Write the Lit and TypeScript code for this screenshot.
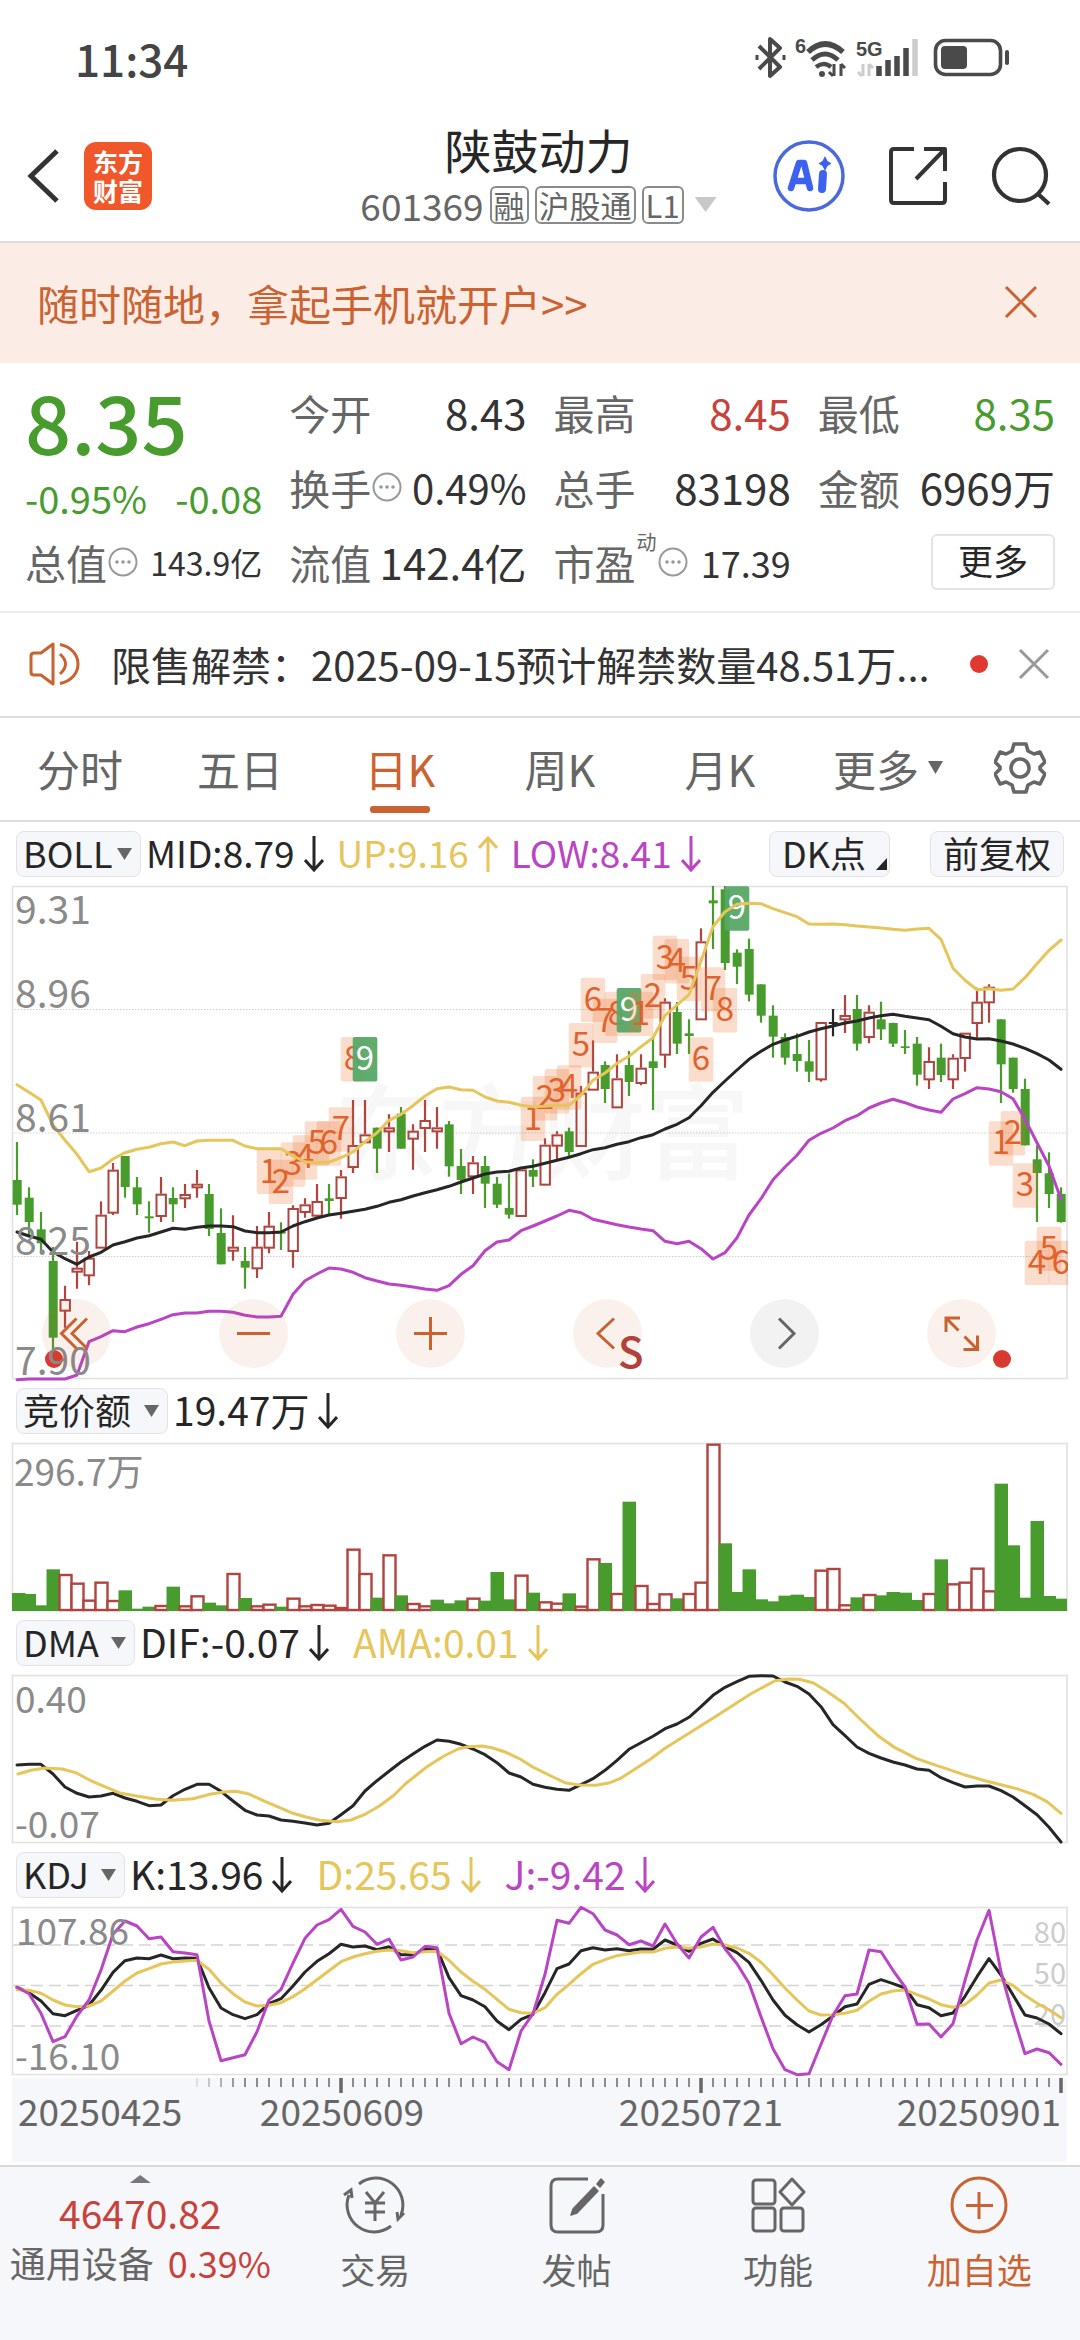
import { LitElement, html, svg, css, nothing } from "lit";
import { customElement, state } from "lit/decorators.js";
import { classMap } from "lit/directives/class-map.js";

/* ---- Series data. Values are in plot units, three units per pixel, measured down the panel. ---- */

type Candle = [string, number, number, number, number];

// kind, high, body top, body bottom, low
const CANDLES: Candle[] = [
  ["g", 813, 927, 1001, 1032], ["g", 949, 980, 1053, 1095], ["g", 1023, 1075, 1117, 1143], ["g", 1128, 1170, 1400, 1435],
  ["r", 1244, 1284, 1319, 1370], ["r", 1112, 1190, 1202, 1253], ["r", 1140, 1160, 1213, 1243], ["r", 991, 1031, 1130, 1130],
  ["r", 876, 896, 1025, 1032], ["g", 855, 855, 948, 980], ["g", 918, 949, 1000, 1032], ["g", 991, 1036, 1042, 1085],
  ["r", 918, 968, 1035, 1053], ["g", 949, 981, 1000, 1053], ["r", 939, 969, 982, 1011], ["r", 897, 938, 949, 980],
  ["g", 939, 969, 1074, 1095], ["g", 1012, 1086, 1180, 1180], ["r", 1033, 1127, 1139, 1169], ["g", 1128, 1170, 1190, 1253],
  ["r", 1065, 1127, 1192, 1221], ["r", 1023, 1064, 1130, 1147], ["g", 1054, 1082, 1088, 1137], ["r", 1003, 1011, 1140, 1190],
  ["r", 982, 1000, 1023, 1040], ["r", 939, 990, 1034, 1034], ["g", 939, 982, 990, 1032], ["r", 897, 916, 981, 1043],
  ["r", 687, 822, 888, 906], ["r", 687, 790, 814, 814], ["g", 770, 770, 833, 906], ["r", 730, 769, 781, 843],
  ["g", 708, 728, 833, 833], ["r", 760, 779, 803, 896], ["r", 687, 747, 771, 843], ["r", 708, 769, 781, 833],
  ["g", 750, 760, 886, 917], ["g", 834, 885, 927, 969], ["r", 855, 874, 916, 969], ["g", 855, 885, 938, 1011],
  ["g", 918, 938, 1001, 1011], ["g", 908, 1011, 1031, 1043], ["r", 895, 895, 1035, 1035], ["g", 865, 897, 917, 948],
  ["r", 802, 821, 941, 941], ["r", 781, 790, 824, 865], ["g", 770, 781, 843, 860], ["r", 645, 665, 825, 825],
  ["r", 508, 602, 656, 656], ["g", 571, 582, 654, 696], ["r", 550, 622, 709, 709], ["g", 540, 582, 633, 675],
  ["r", 550, 590, 636, 643], ["g", 500, 571, 591, 717], ["r", 382, 392, 551, 590], ["g", 393, 423, 518, 549],
  ["g", 445, 487, 495, 549], ["r", 172, 211, 445, 445], ["g", 45, 88, 97, 234], ["g", 45, 55, 276, 297],
  ["g", 235, 245, 287, 339], ["g", 203, 234, 371, 391], ["g", 340, 340, 434, 455], ["g", 403, 434, 497, 560],
  ["g", 487, 498, 560, 581], ["g", 487, 549, 570, 602], ["g", 507, 571, 602, 633], ["r", 453, 453, 625, 632],
  ["k", 414, 453, 459, 496], ["r", 372, 432, 445, 486], ["g", 372, 414, 518, 539], ["r", 403, 422, 498, 517],
  ["g", 392, 445, 475, 507], ["g", 455, 456, 518, 528], ["g", 477, 526, 531, 549], ["g", 498, 518, 611, 644],
  ["r", 529, 570, 625, 654], ["g", 518, 560, 612, 633], ["r", 550, 560, 625, 654], ["r", 485, 485, 561, 602],
  ["r", 350, 392, 456, 500], ["r", 340, 347, 394, 455], ["g", 445, 445, 580, 696], ["g", 560, 560, 654, 665],
  ["g", 623, 654, 823, 823], ["g", 823, 865, 906, 1053], ["g", 844, 907, 969, 1011], ["g", 949, 969, 1053, 1055],
];

const BOLL_UP = [
  641, 664, 687, 762, 808, 850, 902, 891, 864, 845, 835, 829, 818, 813, 824, 810, 808, 808, 808, 825, 833, 833, 833, 855,
  872, 875, 873, 860, 843, 812, 785, 748, 730, 704, 675, 653, 648, 656, 658, 678, 690, 694, 703, 707, 706, 703, 703, 672,
  628, 606, 577, 556, 527, 500, 434, 402, 371, 270, 167, 122, 100, 97, 98, 113, 125, 137, 159, 160, 159, 161, 165, 168,
  171, 175, 178, 174, 172, 205, 292, 328, 356, 353, 358, 354, 320, 278, 238, 207,
];
const BOLL_MID = [
  1083, 1095, 1105, 1143, 1163, 1180, 1158, 1144, 1122, 1112, 1101, 1094, 1083, 1072, 1075, 1069, 1065, 1065, 1067, 1080,
  1085, 1085, 1083, 1065, 1052, 1041, 1032, 1027, 1021, 1015, 1006, 994, 986, 975, 965, 956, 946, 933, 921, 909, 903, 901,
  891, 886, 877, 868, 859, 848, 836, 830, 820, 812, 800, 791, 774, 760, 740, 704, 664, 630, 597, 565, 541, 520, 507, 496,
  483, 473, 465, 456, 450, 441, 434, 430, 436, 441, 446, 466, 488, 498, 504, 503, 510, 519, 532, 548, 567, 595,
];
const BOLL_LOW = [
  1526, 1524, 1524, 1524, 1524, 1512, 1412, 1397, 1379, 1382, 1368, 1358, 1345, 1331, 1326, 1326, 1321, 1321, 1324, 1333,
  1338, 1338, 1336, 1270, 1229, 1209, 1191, 1194, 1204, 1220, 1230, 1239, 1243, 1248, 1254, 1258, 1244, 1210, 1184, 1139,
  1113, 1107, 1079, 1065, 1050, 1035, 1018, 1025, 1045, 1053, 1061, 1068, 1074, 1079, 1111, 1118, 1111, 1133, 1164, 1145,
  1100, 1032, 983, 926, 888, 853, 808, 787, 771, 749, 734, 711, 696, 685, 695, 708, 717, 724, 684, 668, 650, 654, 662,
  683, 745, 815, 885, 985,
];

// candle index, top of the tag, count
const COUNTS: [number, number, number][] = [
  [21, 836, 1], [22, 866, 2], [23, 814, 3], [24, 793, 4], [25, 751, 5], [26, 751, 6], [27, 709, 7], [28, 498, 8], [29, 498, 9],
  [43, 677, 1], [44, 615, 2], [45, 594, 3], [46, 583, 4], [47, 456, 5], [48, 320, 6], [49, 383, 7], [50, 362, 8], [51, 351, 9],
  [52, 362, 1], [53, 309, 2], [54, 194, 3], [55, 204, 4], [56, 257, 5], [57, 499, 6], [58, 289, 7], [59, 351, 8], [60, 46, 9],
  [82, 751, 1], [83, 720, 2], [84, 877, 3], [85, 1109, 4], [86, 1067, 5], [87, 1109, 6],
];

const VOLUME =
  "g636 g639 g673 g565 r579 r605 r656 r602 r657 g628 g683 g677 r672 g617 r673 r643 g665 g673 r576 g651 r673 r668 g677 r650 " +
  "r673 r669 r671 r678 r503 r576 g650 r520 g643 r666 r673 g656 g667 g658 r650 g659 g573 g655 r581 g635 r661 r665 g637 r674 " +
  "r532 g546 r636 g362 r612 r666 r637 g652 r636 r602 r188 g487 g633 g565 g655 g661 g644 g641 g648 r566 r561 r670 g649 r639 " +
  "g643 g633 g635 g657 r636 g535 r607 r602 r560 r628 g308 g493 g650 g420 g645 g653";

const DIF = [
  461, 459, 459, 488, 527, 546, 557, 554, 546, 560, 570, 583, 581, 553, 534, 519, 519, 540, 569, 597, 611, 614, 626, 630,
  635, 641, 636, 610, 583, 539, 508, 480, 452, 428, 405, 386, 390, 399, 413, 430, 454, 485, 497, 519, 528, 534, 537, 520,
  502, 477, 447, 414, 394, 375, 352, 338, 318, 286, 252, 228, 211, 195, 193, 194, 212, 225, 248, 286, 340, 373, 407, 426,
  440, 452, 461, 473, 477, 499, 514, 527, 524, 524, 538, 557, 583, 610, 648, 692,
];
// The average is smooth enough to be kept as sparse x,y pairs.
const AMA: [number, number][] = [
  [18, 488], [31, 477], [45, 470], [62, 473], [76, 484], [90, 507], [107, 529], [121, 546], [138, 555], [155, 563],
  [172, 567], [193, 562], [210, 549], [224, 542], [236, 540], [248, 547], [265, 570], [293, 606], [306, 617], [320, 627],
  [337, 631], [351, 626], [365, 609], [379, 585], [393, 554], [406, 516], [427, 466], [444, 434], [458, 413], [468, 406],
  [482, 404], [492, 409], [506, 423], [520, 443], [534, 469], [551, 494], [565, 514], [579, 521], [596, 522], [610, 514],
  [620, 502], [634, 475], [651, 442], [665, 411], [689, 366], [716, 315], [751, 247], [775, 208], [789, 203], [799, 204],
  [813, 214], [826, 238], [844, 276], [861, 326], [878, 373], [895, 409], [916, 441], [937, 463], [964, 490], [985, 508],
  [1002, 521], [1019, 534], [1033, 549], [1047, 571], [1061, 606],
];

const K_LINE = [
  409, 425, 450, 488, 494, 478, 463, 418, 364, 329, 321, 323, 312, 323, 321, 322, 410, 471, 491, 503, 491, 458, 443, 405,
  363, 331, 308, 280, 288, 285, 296, 287, 311, 311, 295, 294, 380, 434, 447, 467, 510, 536, 505, 490, 425, 353, 339, 299,
  290, 297, 293, 299, 294, 295, 267, 282, 301, 277, 264, 287, 305, 334, 388, 447, 493, 521, 543, 521, 495, 467, 459, 400,
  386, 398, 411, 461, 470, 494, 486, 436, 377, 323, 372, 432, 492, 501, 519, 548,
];
const D_LINE = [
  416, 418, 427, 447, 462, 467, 465, 450, 420, 390, 366, 353, 339, 333, 330, 328, 355, 396, 428, 453, 465, 463, 455, 437,
  413, 386, 359, 332, 318, 308, 301, 297, 299, 305, 302, 301, 328, 363, 391, 415, 445, 475, 485, 487, 470, 430, 400, 368,
  340, 326, 314, 308, 303, 303, 292, 288, 292, 288, 279, 282, 291, 307, 334, 371, 411, 447, 480, 492, 491, 487, 478, 451,
  429, 420, 417, 431, 444, 461, 469, 461, 432, 396, 387, 403, 433, 457, 476, 500,
];
const J_LINE = [
  409, 428, 487, 572, 557, 495, 447, 357, 250, 210, 225, 263, 258, 302, 306, 311, 510, 629, 620, 611, 542, 447, 415, 336,
  262, 222, 206, 175, 226, 243, 280, 264, 327, 318, 286, 290, 487, 578, 558, 574, 632, 656, 540, 488, 370, 208, 217, 169,
  188, 237, 252, 281, 270, 285, 219, 278, 321, 258, 229, 293, 338, 397, 497, 593, 656, 671, 668, 580, 493, 434, 429, 297,
  302, 358, 408, 520, 519, 558, 518, 388, 267, 178, 363, 493, 608, 594, 605, 640,
];

/* ---- Plot geometry ---- */

const STEP = 12;
const FIRST = 17;
const RED = "#b0443f";
const GREEN = "#489c2e";
const INK = "#262626";
const YELLOW = "#e6c55a";
const PURPLE = "#b944c4";

const cx = (i: number) => FIRST + STEP * i;
const line = (values: number[], top: number, color: string) =>
  svg`<polyline points=${values.map((v, i) => `${cx(i)},${((v - top) / 3).toFixed(1)}`).join(" ")}
    fill="none" stroke=${color} stroke-width="3" stroke-linejoin="round" stroke-linecap="round"/>`;
const frame = (h: number) =>
  svg`<rect x="12.5" y="0.5" width="1054.5" height=${h - 1} fill="none" stroke="#e2e2e2" stroke-width="1.6"/>`;

const base = css`
  *, *::before, *::after { box-sizing: border-box; }
  button, select {
    font: inherit;
    color: inherit;
    background: none;
    border: 0;
    margin: 0;
    padding: 0;
  }
  button { cursor: pointer; }
  svg { display: block; flex: none; }
`;

const plot = css`
  :host { display: block; position: relative; }
  .plot { width: 100%; height: auto; overflow: visible; }
  .scale { fill: #8a8a8a; font-size: 37px; }
  .price { fill: #8a8a8a; font-size: 39px; }
  .level { fill: #cccccc; font-size: 29px; text-anchor: end; }
`;

@customElement("candle-panel")
class CandlePanel extends LitElement {
  static styles = [
    base,
    plot,
    css`
      .mark { font-size: 104px; font-weight: 500; fill: #f7f7f7; }
      .count { font-size: 33px; fill: #e0622c; text-anchor: middle; }
      .count-nine { fill: #ffffff; }
      .sell { font-size: 42px; font-weight: 500; fill: #b0403a; }
      .tools {
        position: absolute;
        left: 42px;
        right: 84px;
        bottom: 11px;
        display: flex;
        justify-content: space-between;
      }
      .tool {
        width: 69px;
        height: 69px;
        border-radius: 50%;
        background: rgba(203, 98, 49, 0.09);
        color: #c8632f;
      }
      .tool-off { background: rgba(0, 0, 0, 0.05); color: #666666; }
    `,
  ];

  private candle([kind, high, top, bottom, low]: Candle, i: number) {
    const x = cx(i);
    const y = (v: number) => (v - 45) / 3;
    const color = kind === "r" ? RED : kind === "g" ? GREEN : INK;
    if (kind === "r") {
      return svg`<path d="M${x} ${y(high)}V${y(top)}M${x} ${y(bottom)}V${y(low)}" stroke=${color} stroke-width="2.2"/>
        <rect x=${x - 4.5} y=${y(top) + 1} width="9.4" height=${Math.max(y(bottom) - y(top) - 1, 2)}
          fill="none" stroke=${color} stroke-width="2"/>`;
    }
    return svg`<path d="M${x} ${y(high)}V${y(low)}" stroke=${color} stroke-width="2.2"/>
      <rect x=${x - 4.3} y=${y(top)} width="9" height=${y(bottom) - y(top)} fill=${color}/>`;
  }

  private count([i, top, n]: [number, number, number]) {
    const y = (top - 45) / 3;
    const nine = n === 9;
    return svg`<rect x=${cx(i) - 12.3} y=${y} width="24.6" height="44.4" rx="2"
        fill=${nine ? "#57a866" : "#e9722f"} fill-opacity=${nine ? 0.95 : 0.24}/>
      <text class=${nine ? "count count-nine" : "count"} x=${cx(i)} y=${y + 33}>${n}</text>`;
  }

  render() {
    const tools: [string, string, boolean][] = [
      ["最早", "M34.500 19.500 19.500 34.500l15 15M45 19.500 30 34.500l15 15", false],
      ["缩小", "M18 34.500h33", false],
      ["放大", "M18 34.500h33M34.500 18v33", false],
      ["向前", "M41 19.500 25 34.500l16 15", false],
      ["向后", "M29 19.500l15 15-15 15", true],
      ["全屏", "M33 19H19v14M19 19l12.500 12.500M36.500 50.500h14v-14M50.500 50.500 37.500 37.500", false],
    ];
    return html`
      <svg class="plot" viewBox="0 0 1080 493" role="img" aria-label="日K线与BOLL">
        <clipPath id="inside"><rect x="12" y="0" width="1056" height="493"/></clipPath>
        <text class="mark" x="334" y="286">东方财富</text>
        ${[123.5, 247, 370.5].map((y) => svg`<path d="M12 ${y}H1067" stroke="#cfcfcf" stroke-width="1" stroke-dasharray="1.500 1.500"/>`)}
        ${frame(493)}
        <g clip-path="url(#inside)">
          ${CANDLES.map((c, i) => this.candle(c, i))}
          ${COUNTS.map((c) => this.count(c))}
        </g>
        ${line(BOLL_UP, 45, YELLOW)} ${line(BOLL_MID, 45, INK)} ${line(BOLL_LOW, 45, PURPLE)}
        <circle cx="54" cy="473" r="9" fill="#d93a30"/>
        <circle cx="1002" cy="473" r="9" fill="#d93a30"/>
        <text class="sell" x="618" y="482">S</text>
        ${[["9.31", 38], ["8.96", 122], ["8.61", 246], ["8.25", 369], ["7.90", 489]].map(
          ([t, y]) => svg`<text class="price" x="15" y=${y}>${t}</text>`
        )}
      </svg>
      <div class="tools">
        ${tools.map(
          ([name, d, off]) => html`<button class=${classMap({ tool: true, "tool-off": off })} aria-label=${name}>
            <svg width="69" height="69" fill="none" stroke="currentColor" stroke-width="3"><path d=${d}/></svg>
          </button>`
        )}
      </div>
    `;
  }
}

@customElement("volume-panel")
class VolumePanel extends LitElement {
  static styles = [base, plot];

  render() {
    return html`<svg class="plot" viewBox="0 0 1080 168" role="img" aria-label="竞价额">
      ${frame(168)}
      ${VOLUME.split(" ").map((item, i) => {
        const y = (Number(item.slice(1)) - 186) / 3;
        const x = cx(i);
        return item[0] === "g"
          ? svg`<rect x=${Math.max(x - 6.5, 12)} y=${y} width=${i === 87 ? 12.5 : 13.5} height=${168 - y} fill=${GREEN}/>`
          : svg`<rect x=${x - 5.5} y=${y + 1} width="12" height=${166 - y} fill="#ffffff" stroke=${RED} stroke-width="2.4"/>`;
      })}
      <text class="scale" x="14" y="43">296.7万</text>
    </svg>`;
  }
}

@customElement("dma-panel")
class DmaPanel extends LitElement {
  static styles = [base, plot];

  render() {
    return html`<svg class="plot" viewBox="0 0 1080 168" role="img" aria-label="DMA">
      ${frame(168)} ${line(DIF, 191, INK)}
      <polyline points=${AMA.map(([x, y]) => `${x},${((y - 191) / 3).toFixed(1)}`).join(" ")}
        fill="none" stroke=${YELLOW} stroke-width="3" stroke-linejoin="round" stroke-linecap="round"/>
      <text class="scale" x="15" y="38">0.40</text>
      <text class="scale" x="15" y="163">-0.07</text>
    </svg>`;
  }
}

@customElement("kdj-panel")
class KdjPanel extends LitElement {
  static styles = [base, plot];

  render() {
    return html`<svg class="plot" viewBox="0 0 1080 168" role="img" aria-label="KDJ">
      ${[38, 78.500, 119].map((y) => svg`<path d="M13 ${y}H1067" stroke="#d4d4d4" stroke-width="1.400" stroke-dasharray="12 6"/>`)}
      ${frame(168)}
      <text class="level" x="1066" y="36">80</text>
      <text class="level" x="1066" y="77">50</text>
      <text class="level" x="1066" y="118">20</text>
      ${line(K_LINE, 168, INK)} ${line(D_LINE, 168, YELLOW)} ${line(J_LINE, 168, PURPLE)}
      <text class="scale" x="16" y="38">107.86</text>
      <text class="scale" x="15" y="163">-16.10</text>
    </svg>`;
  }
}

type Reading = [string, string, "up" | "down"];

@customElement("indicator-bar")
class IndicatorBar extends LitElement {
  static properties = { name: {}, readings: { attribute: false }, compact: { type: Boolean } };
  declare name: string;
  declare readings: Reading[];
  declare compact: boolean;

  static styles = [
    base,
    css`
      :host { display: block; }
      .bar { display: flex; align-items: center; height: 64px; padding: 0 16px; color: #262626; }
      .chip {
        display: flex;
        align-items: center;
        gap: 12px;
        height: 46px;
        padding: 0 8px 0 6px;
        border: 1px solid #e2e3e8;
        border-radius: 8px;
        background: #f6f7fa;
        font-size: 36px;
        line-height: 40px;
      }
      .chip-tight { gap: 4px; }
      .chip-wide { gap: 10px; padding: 0 12px; }
      .pick { appearance: none; outline: 0; line-height: 40px; height: 44px; padding-bottom: 4px; cursor: pointer; }
      .caret { width: 15px; height: 12px; background: #666666; clip-path: polygon(0 0, 100% 0, 50% 100%); pointer-events: none; }
      .readings { display: flex; align-items: center; gap: 24px; margin-left: 5px; font-size: 39px; line-height: 46px; flex: 1; }
      .readings-tight { gap: 13px; font-size: 37px; }
      .reading { display: flex; align-items: center; gap: 9px; white-space: nowrap; }
      .figure { padding-bottom: 5px; }
      .ink { color: #262626; }
      .yellow { color: #e6c55a; }
      .purple { color: #b944c4; }
      .extra { display: flex; gap: 40px; }
      .face { padding-bottom: 4px; }
      .corner { width: 11px; height: 12px; margin: 20px -10px 0 0; background: #262626; clip-path: polygon(100% 0, 100% 100%, 0 100%); }
    `,
  ];

  render() {
    return html`<div class="bar">
      <label class=${classMap({ chip: true, "chip-tight": this.compact })}>
        <select class="pick" aria-label="指标"><option>${this.name}</option></select>
        <span class="caret"></span>
      </label>
      <div class=${classMap({ readings: true, "readings-tight": this.compact })}>
        ${this.readings.map(
          ([text, tone, way]) => html`<span class="reading ${tone}"><span class="figure">${text}</span>
            <svg width="20" height="36" fill="none" stroke="currentColor" stroke-width="3">
              <path d=${way === "down" ? "M10 0v34M1 24l9 10 9-10" : "M10 36V2M1 12l9-10 9 10"}/>
            </svg></span>`
        )}
      </div>
      ${this.compact
        ? html`<div class="extra">
            <button class="chip chip-wide"><span class="face">DK点</span><span class="corner"></span></button>
            <button class="chip chip-wide"><span class="face">前复权</span></button>
          </div>`
        : nothing}
    </div>`;
  }
}

@customElement("stock-header")
class StockHeader extends LitElement {
  static styles = [
    base,
    css`
      :host { display: block; border-bottom: 2px solid #dcdcdc; }
      .status { display: flex; justify-content: space-between; align-items: center; padding: 28px 70px 30px 75px; }
      .clock { font-size: 44px; line-height: 60px; font-weight: 500; color: #444444; }
      .radio { font: 700 20px/1 "Liberation Sans", sans-serif; fill: #4a4a4a; }
      .nav { display: grid; grid-template-columns: 1fr auto 1fr; align-items: center; height: 123px; padding: 0 29px 8px 26px; }
      .side { display: flex; align-items: center; gap: 24px; }
      .side-end { justify-content: flex-end; gap: 43px; }
      .brand {
        display: grid;
        place-content: center;
        width: 68px;
        height: 68px;
        border-radius: 12px;
        background: #f0572b;
        color: #ffffff;
        font-size: 25px;
        line-height: 29px;
        font-weight: 700;
        text-align: center;
      }
      .title { margin: 0; font-size: 47px; line-height: 58px; font-weight: 400; color: #262626; text-align: center; }
      .code { display: flex; align-items: center; gap: 6px; font-size: 37px; line-height: 54px; color: #666666; }
      .tag { border: 2px solid #8a8a8a; border-radius: 6px; padding: 0 2px; font-size: 31px; line-height: 34px; }
      .down { width: 22px; height: 15px; margin-left: 5px; background: #c8c8c8; clip-path: polygon(0 0, 100% 0, 50% 100%); }
    `,
  ];

  render() {
    return html`
      <div class="status">
        <time class="clock">11:34</time>
        <svg width="256" height="44" viewBox="754 38 256 44" fill="none" stroke="#4a4a4a">
          <path d="M759 48l21 21-10 9V41l10 9-21 21" stroke-width="4" stroke-linejoin="round"/>
          <path d="M757 57v5M784 57v5" stroke-width="3"/>
          <text class="radio" x="795" y="55" stroke="none">6</text>
          <path d="M808 54q17-16 35 0" stroke-width="5.500"/>
          <path d="M812 62q13-12 26 0" stroke-width="5"/>
          <path d="M816 69q8-6 15 0" stroke-width="4.600"/>
          <circle cx="822" cy="76" r="3" fill="#4a4a4a" stroke="none"/>
          <path d="M834 66v12M829 74l4 4M841 78V66M845 70l-4-4" stroke-width="3"/>
          <text class="radio" x="856" y="58" stroke="none">5G</text>
          <path d="M863 66v12M858 74l4 4M869 78V66M873 70l-4-4" stroke="#cccccc" stroke-width="3"/>
          <path d="M879 68v10M888 62v16M897 58v20M906 50v28" stroke-width="5.500"/>
          <path d="M915 41v37" stroke="#cccccc" stroke-width="5.500"/>
          <rect x="935.500" y="42.500" width="65" height="34" rx="10" stroke-width="3.600"/>
          <rect x="941" y="48" width="26" height="23" rx="4" fill="#4a4a4a" stroke="none"/>
          <path d="M1007 54v11" stroke-width="4" stroke-linecap="round"/>
        </svg>
      </div>
      <div class="nav">
        <div class="side">
          <button aria-label="返回">
            <svg width="34" height="56" fill="none" stroke="#333333" stroke-width="5"><path d="M31 3 5 28l26 25"/></svg>
          </button>
          <span class="brand">东方<br />财富</span>
        </div>
        <div>
          <h1 class="title">陕鼓动力</h1>
          <div class="code">601369<span class="tag">融</span><span class="tag">沪股通</span><span class="tag">L1</span><span class="down"></span></div>
        </div>
        <div class="side side-end">
          <button aria-label="Ai">
            <svg width="72" height="72" fill="none" stroke="#4a69dd">
              <circle cx="36" cy="36" r="34" stroke-width="3.500"/>
              <g stroke="#3d62f0" stroke-width="6.500" stroke-linecap="round" stroke-linejoin="round">
                <path d="M18 48 26 23h5l6 25M22 41h12"/><path d="M50 34l-1 15" stroke-width="8"/>
              </g>
              <path d="M52 16l2.500 5 4 2.500-4 2.500-2.500 5-2.500-5-4-2.500 4-2.500z" fill="#3d62f0" stroke="none"/>
            </svg>
          </button>
          <button aria-label="分享">
            <svg width="60" height="60" fill="none" stroke="#333333" stroke-width="4" stroke-linejoin="round">
              <path d="M26 3H6q-3 0-3 3v48q0 3 3 3h48q3 0 3-3V36M36 3h21v22M57 3 28 33"/>
            </svg>
          </button>
          <button aria-label="搜索">
            <svg width="60" height="60" fill="none" stroke="#333333" stroke-width="4.200">
              <circle cx="29" cy="29" r="26"/><path d="M46 47l12 11"/>
            </svg>
          </button>
        </div>
      </div>
    `;
  }
}

@customElement("quote-summary")
class QuoteSummary extends LitElement {
  static styles = [
    base,
    css`
      :host { display: block; border-bottom: 2px solid #ededed; }
      .quote { display: grid; grid-template-columns: repeat(4, minmax(0, 1fr)); column-gap: 27px; padding: 11px 25px 12px; }
      .lead { grid-row: 1 / 3; color: #489c2e; }
      .last { font-size: 81px; line-height: 92px; font-weight: 500; }
      .moves { display: flex; justify-content: space-between; margin-top: 7px; font-size: 38px; line-height: 50px; }
      .cell { display: flex; justify-content: space-between; align-items: center; height: 75px; margin: 0; white-space: nowrap; }
      .label { display: flex; align-items: center; font-size: 41px; color: #666666; gap: 1px; }
      .sup { align-self: flex-start; font-size: 20px; line-height: 20px; }
      .value { margin: 0; font-size: 42px; color: #333333; }
      .value-mid { font-size: 40px; }
      .value-md { font-size: 36px; }
      .value-sm { font-size: 32px; }
      .rise { color: #c8423b; }
      .fall { color: #489c2e; }
      .end { justify-content: flex-end; }
      .more { width: 124px; height: 56px; border: 2px solid #e4e4e4; border-radius: 6px; font-size: 35px; line-height: 48px; padding-bottom: 4px; color: #262626; }
    `,
  ];

  private dots = html`<svg width="30" height="32" fill="#999999">
    <circle cx="15" cy="16" r="13.500" fill="none" stroke="#999999" stroke-width="2"/>
    <circle cx="9" cy="16" r="1.800"/><circle cx="15" cy="16" r="1.800"/><circle cx="21" cy="16" r="1.800"/>
  </svg>`;

  private cell(label: string, value: string, tone = "", hint = false, sup = "") {
    return html`<dl class="cell">
      <dt class="label">${label}${sup ? html`<span class="sup">${sup}</span>` : nothing}${hint ? this.dots : nothing}</dt>
      <dd class="value ${tone}">${value}</dd>
    </dl>`;
  }

  render() {
    return html`<div class="quote">
      <div class="lead">
        <div class="last">8.35</div>
        <div class="moves"><span>-0.95%</span><span>-0.08</span></div>
      </div>
      ${this.cell("今开", "8.43")} ${this.cell("最高", "8.45", "rise")} ${this.cell("最低", "8.35", "fall")}
      ${this.cell("换手", "0.49%", "value-mid", true)} ${this.cell("总手", "83198")} ${this.cell("金额", "6969万")}
      ${this.cell("总值", "143.9亿", "value-sm", true)} ${this.cell("流值", "142.4亿")}
      ${this.cell("市盈", "17.39", "value-md", true, "动")}
      <div class="cell end"><button class="more">更多</button></div>
    </div>`;
  }
}

@customElement("app-root")
class AppRoot extends LitElement {
  @state() private tab = "日K";

  static styles = [
    base,
    css`
      :host {
        display: flex;
        flex-direction: column;
        min-height: 100vh;
        background: #ffffff;
        color: #262626;
        font-family: "Noto Sans CJK SC", "Noto Sans", sans-serif;
      }
      .promo {
        display: flex;
        justify-content: space-between;
        align-items: center;
        height: 120px;
        padding: 0 42px 2px 37px;
        background: #fbede5;
        color: #cb6231;
        font-size: 42px;
      }
      .promo-link { color: inherit; text-decoration: none; }
      .notice { display: flex; align-items: center; height: 105px; padding: 0 30px 2px 28px; border-bottom: 2px solid #dcdcdc; color: #333333; }
      .notice-text { flex: 1; margin-left: 29px; font-size: 40px; white-space: nowrap; overflow: hidden; text-overflow: ellipsis; }
      .dot { width: 18px; height: 18px; border-radius: 50%; background: #e0392f; margin: 0 30px 0 10px; }
      .tabs { display: grid; grid-template-columns: repeat(6, 4fr) 3fr; height: 104px; border-bottom: 2px solid #dcdcdc; color: #666666; }
      .tab {
        display: flex;
        align-items: center;
        justify-content: center;
        gap: 9px;
        font-size: 43px;
        padding-bottom: 3px;
      }
      .tab-on { position: relative; color: #cb6231; }
      .tab-on::after {
        content: "";
        position: absolute;
        left: 50%;
        bottom: 7px;
        width: 60px;
        height: 7px;
        margin-left: -30px;
        border-radius: 3px;
        background: #cb6231;
      }
      .tab-more { padding-left: 16px; }
      .tip { width: 15px; height: 13px; background: #666666; clip-path: polygon(0 0, 100% 0, 50% 100%); }
      .axis { padding: 3px 0; }
      .axis-plot { width: 100%; height: auto; }
      .date { font-size: 37px; fill: #666666; }
      .date-mid { text-anchor: middle; }
      .date-end { text-anchor: end; }
      .dock {
        flex: 1;
        display: grid;
        grid-template-columns: minmax(0, 274fr) repeat(4, minmax(0, 201fr));
        align-items: start;
        border-top: 2px solid #d8d9dd;
        background: #f6f7fa;
        color: #666666;
      }
      .sector { display: flex; flex-direction: column; align-items: center; padding: 8px 0 0 6px; white-space: nowrap; }
      .up { width: 21px; height: 8px; background: #77777c; clip-path: polygon(50% 0, 100% 100%, 0 100%); }
      .index { font-size: 39px; line-height: 50px; margin-top: 4px; color: #c8423b; }
      .change { display: flex; gap: 14px; font-size: 36px; line-height: 50px; }
      .change-value { color: #c8423b; }
      .action { display: flex; flex-direction: column; align-items: center; gap: 10px; padding-top: 8px; font-size: 35px; line-height: 48px; }
      .action-key { color: #cb6231; }
    `,
  ];

  private axis() {
    const ticks = Array.from({ length: 74 }, (_, n) => n + 14);
    return html`<div class="axis">
      <svg class="axis-plot" viewBox="0 0 1080 84" role="img" aria-label="日期">
        <rect x="12" y="0" width="1055" height="84" fill="#f6f7fa"/>
        ${ticks.map((i) => {
          const major = i % 30 === 27;
          return svg`<path d="M${cx(i)} 0V${major ? 15 : 9}" stroke=${major ? "#666666" : "#8c8c8c"}
            stroke-width=${major ? 3.5 : 2} stroke-opacity=${i < 19 ? (i - 14) * 0.22 : 1}/>`;
        })}
        <text class="date" x="18" y="48">20250425</text>
        <text class="date date-mid" x="342" y="48">20250609</text>
        <text class="date date-mid" x="701" y="48">20250721</text>
        <text class="date date-end" x="1061" y="48">20250901</text>
      </svg>
    </div>`;
  }

  private dock() {
    return html`<nav class="dock">
      <div class="sector">
        <span class="up"></span>
        <span class="index">46470.82</span>
        <span class="change">通用设备<span class="change-value">0.39%</span></span>
      </div>
      <button class="action">
        <svg width="66" height="60" fill="none" stroke="#666666" stroke-width="3">
          <path d="M17 9A27 27 0 0 1 59 40M62 38l-6 6-1-7M49 51A27 27 0 0 1 7 20M2 20l7-5 1 8"/>
          <path d="M24 17l9 11 9-11M33 28v18M23 28h20M23 37h20"/>
        </svg>
        交易
      </button>
      <button class="action">
        <svg width="58" height="60" fill="none" stroke="#666666" stroke-width="3">
          <path d="M40 4H10q-7 0-7 7v39q0 7 7 7h38q7 0 7-7V19"/>
          <path d="M49 9 53 4l3 3-4 5zM46 12l4 4-21 22-6 2 2-6z" fill="#666666" stroke-width="1.500" stroke-linejoin="round"/>
        </svg>
        发帖
      </button>
      <button class="action">
        <svg width="56" height="60" fill="none" stroke="#666666" stroke-width="3">
          <rect x="3" y="5" width="22" height="24" rx="3"/><rect x="3" y="33" width="22" height="23" rx="3"/>
          <rect x="31" y="33" width="22" height="23" rx="3"/><path d="M42 4 54 17 42 30 30 17z" stroke-linejoin="round"/>
        </svg>
        功能
      </button>
      <button class="action action-key">
        <svg width="60" height="60" fill="none" stroke="#cb6231" stroke-width="3">
          <circle cx="30" cy="30" r="27"/><path d="M30 17v27M17 30.500h27"/>
        </svg>
        加自选
      </button>
    </nav>`;
  }

  render() {
    const tabs = ["分时", "五日", "日K", "周K", "月K"];
    return html`
      <stock-header></stock-header>
      <div class="promo">
        <a class="promo-link" href="#">随时随地，拿起手机就开户&gt;&gt;</a>
        <button aria-label="关闭">
          <svg width="34" height="34" fill="none" stroke="#cb6231" stroke-width="3"><path d="M2 2l30 30M32 2 2 32"/></svg>
        </button>
      </div>
      <quote-summary></quote-summary>
      <div class="notice">
        <svg width="54" height="46" fill="none" stroke="#c8632f" stroke-width="3" stroke-linejoin="round">
          <path d="M25 3v40L13 34H6q-3 0-3-3V15q0-3 3-3h7z"/><path d="M32 13q11 10 0 20M32 3.500c24 5 24 34 0 39"/>
        </svg>
        <span class="notice-text">限售解禁：2025-09-15预计解禁数量48.51万...</span>
        <span class="dot"></span>
        <button aria-label="关闭">
          <svg width="32" height="32" fill="none" stroke="#999999" stroke-width="3"><path d="M2 2l28 28M30 2 2 30"/></svg>
        </button>
      </div>
      <div class="tabs" role="tablist">
        ${tabs.map(
          (t) => html`<button role="tab" aria-selected=${t === this.tab}
            class=${classMap({ tab: true, "tab-on": t === this.tab })} @click=${() => (this.tab = t)}>${t}</button>`
        )}
        <button class="tab tab-more">更多<span class="tip"></span></button>
        <button class="tab" aria-label="设置">
          <svg width="52" height="54" viewBox="-26 -27 52 54" fill="none" stroke="#666666" stroke-width="3.600" stroke-linejoin="round">
            <path d="M-6-24H6L8-17 14-14 20-16 25-6 20-1V1L25 6 20 16 14 14 8 17 6 24H-6L-8 17-14 14-20 16-25 6-20 1V-1L-25-6-20-16-14-14-8-17z"/>
            <circle r="9"/>
          </svg>
        </button>
      </div>
      <indicator-bar name="BOLL" compact
        .readings=${[["MID:8.79", "ink", "down"], ["UP:9.16", "yellow", "up"], ["LOW:8.41", "purple", "down"]]}></indicator-bar>
      <candle-panel></candle-panel>
      <indicator-bar name="竞价额" .readings=${[["19.47万", "ink", "down"]]}></indicator-bar>
      <volume-panel></volume-panel>
      <indicator-bar name="DMA" .readings=${[["DIF:-0.07", "ink", "down"], ["AMA:0.01", "yellow", "down"]]}></indicator-bar>
      <dma-panel></dma-panel>
      <indicator-bar name="KDJ"
        .readings=${[["K:13.96", "ink", "down"], ["D:25.65", "yellow", "down"], ["J:-9.42", "purple", "down"]]}></indicator-bar>
      <kdj-panel></kdj-panel>
      ${this.axis()} ${this.dock()}
    `;
  }
}
